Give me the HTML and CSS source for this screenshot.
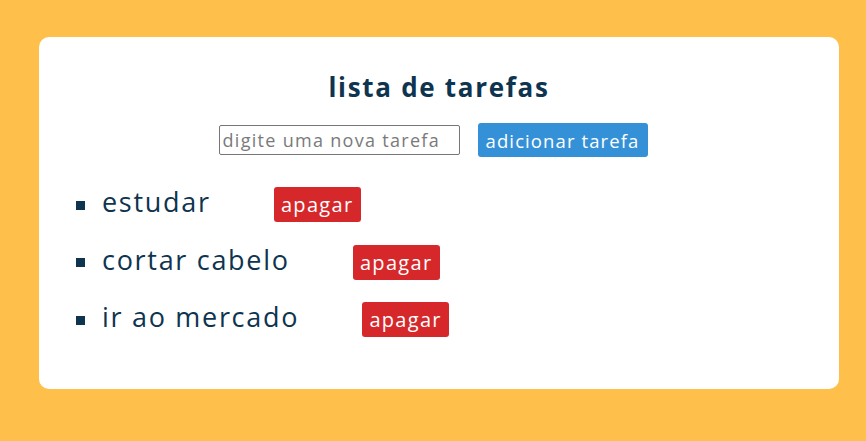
FILE: index.html
```html
<!DOCTYPE html>
<html lang="pt">
<head>
<meta charset="utf-8">
<title>lista de tarefas</title>
<link rel="stylesheet" href="styles.css">
</head>
<body>
<main class="card">
  <h1 class="title">lista de tarefas</h1>
  <form class="new-task">
    <input class="task-input" type="text" placeholder="digite uma nova tarefa">
    <button class="add-btn" type="button">adicionar tarefa</button>
  </form>
  <ul class="tasks">
    <li class="task"><span class="task-name">estudar</span><button class="del-btn" type="button">apagar</button></li>
    <li class="task"><span class="task-name">cortar cabelo</span><button class="del-btn" type="button">apagar</button></li>
    <li class="task"><span class="task-name">ir ao mercado</span><button class="del-btn" type="button">apagar</button></li>
  </ul>
</main>
</body>
</html>
```

FILE: styles.css
```css
* { box-sizing: border-box; }
html, body { margin: 0; padding: 0; }
body {
  background: #ffbf4b;
  font-family: "Open Sans", "Noto Sans", sans-serif;
  color: #0e344f;
  padding: 37px 27px 0 39px;
  height: 441px;
}
.card {
  background: #fff;
  border-radius: 10px;
  width: 800px;
  height: 352px;
  padding: 34px 0 0 0;
}
.title {
  margin: 0;
  text-align: center;
  font-size: 26px;
  line-height: 32px;
  font-weight: 700;
  letter-spacing: 1.7px;
}
.new-task {
  display: flex;
  justify-content: center;
  align-items: center;
  gap: 18px;
  margin-top: 20px;
  padding-right: 12px;
}
.task-input {
  width: 241px;
  height: 30px;
  border: 1px solid #767676;
  border-radius: 2px;
  font-family: inherit;
  font-size: 18px;
  letter-spacing: 1.3px;
  color: #0e344f;
  padding: 0 3px;
}
.task-input::placeholder { color: #7a7a7a; }
.add-btn {
  width: 170px;
  height: 34px;
  background: #3591d7;
  color: #fff;
  border: 0;
  border-radius: 3px;
  font-family: inherit;
  font-size: 18.5px;
  letter-spacing: 1.1px;
  padding: 0;
}
.tasks {
  list-style: none;
  margin: 30px 0 0 0;
  padding: 0 0 0 37px;
  display: flex;
  flex-direction: column;
  gap: 22.5px;
}
.task {
  display: flex;
  align-items: center;
  height: 35px;
}
.task::before {
  content: "";
  width: 9px;
  height: 9px;
  background: #0e344f;
  margin-right: 17px;
  margin-top: 1px;
}
.task-name {
  font-size: 27px;
  line-height: 35px;
  letter-spacing: 1.7px;
  padding-bottom: 6px;
}
.del-btn {
  margin-left: 63px;
  width: 87px;
  height: 35px;
  background: #d6282b;
  color: #fff;
  border: 0;
  border-radius: 3px;
  font-family: inherit;
  font-size: 20px;
  letter-spacing: 1.3px;
  padding: 0;
}
```
